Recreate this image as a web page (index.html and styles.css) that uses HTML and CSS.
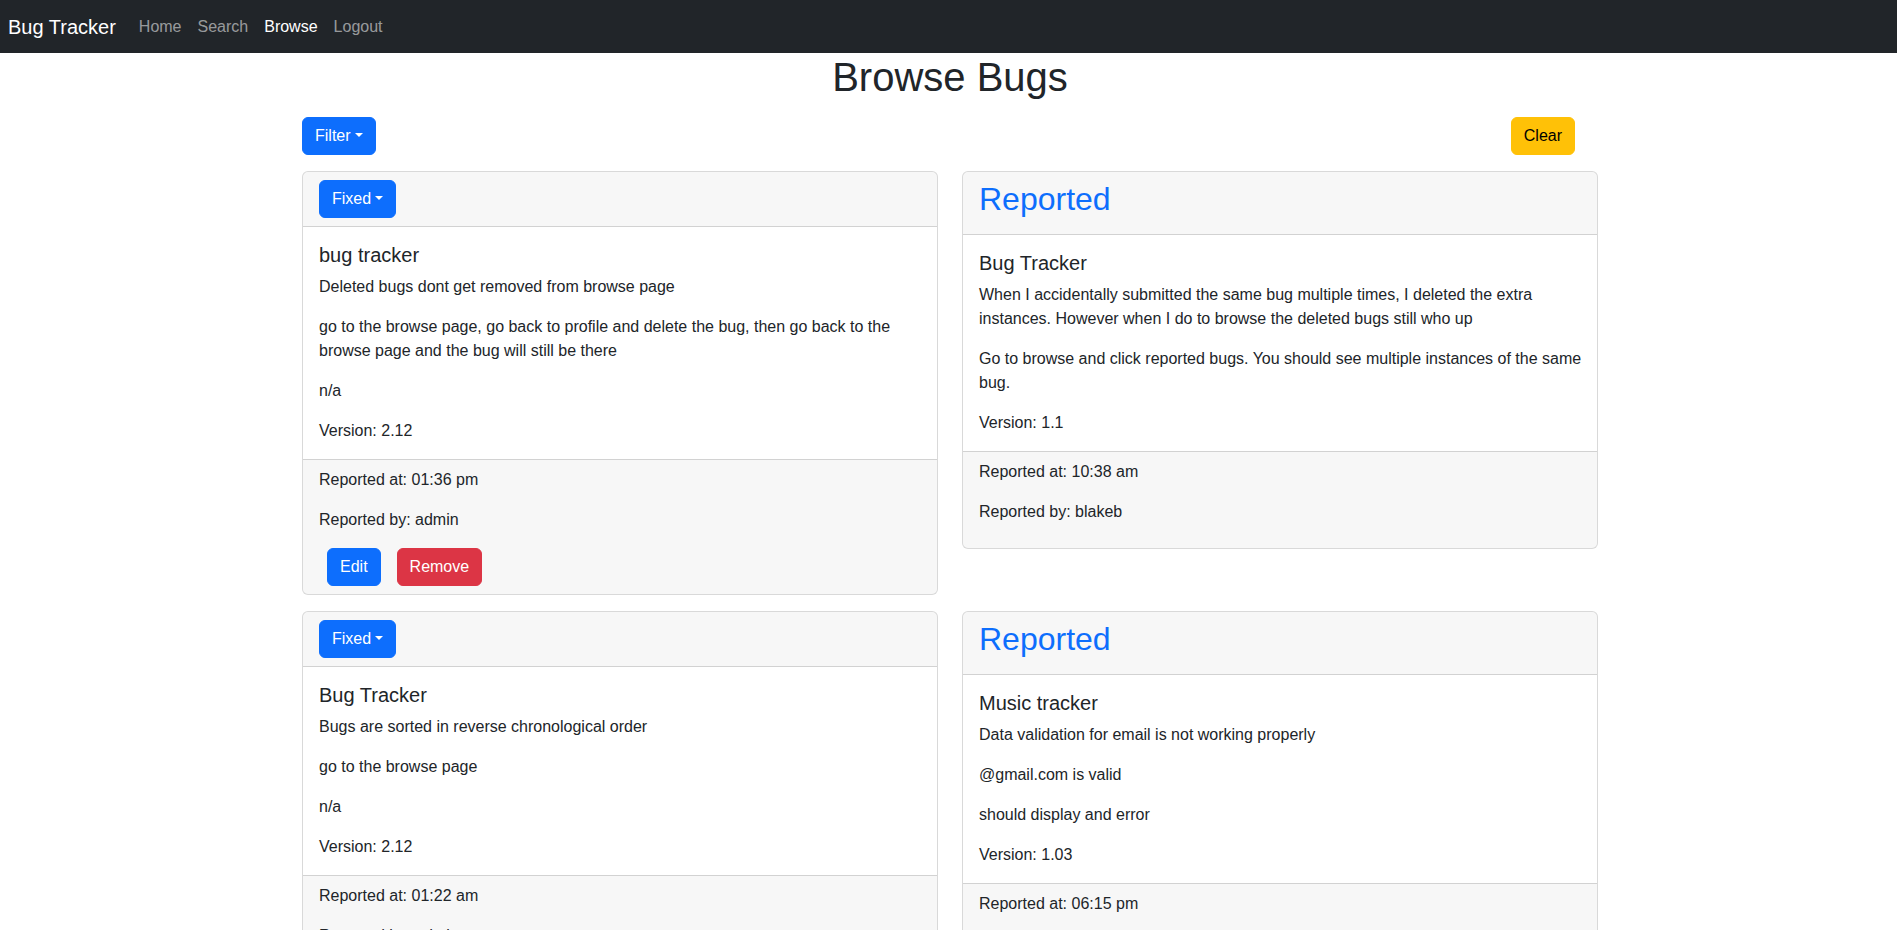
FILE: index.html
```html
<!DOCTYPE html>
<html lang="en">
<head>
<meta charset="utf-8">
<title>Browse Bugs</title>
<link rel="stylesheet" href="styles.css">
</head>
<body>
<nav class="navbar">
  <a class="brand" href="#">Bug Tracker</a>
  <ul class="nav-links">
    <li><a class="nav-link" href="#">Home</a></li>
    <li><a class="nav-link" href="#">Search</a></li>
    <li><a class="nav-link active" href="#">Browse</a></li>
    <li><a class="nav-link" href="#">Logout</a></li>
  </ul>
</nav>

<main class="container">
  <h1 class="page-title">Browse Bugs</h1>

  <div class="toolbar">
    <button class="btn btn-primary dropdown-toggle">Filter</button>
    <button class="btn btn-warning btn-clear">Clear</button>
  </div>

  <div class="bug-grid">
    <div class="card">
      <div class="card-header">
        <button class="btn btn-primary dropdown-toggle">Fixed</button>
      </div>
      <div class="card-body">
        <h5 class="card-title">bug tracker</h5>
        <p class="card-text">Deleted bugs dont get removed from browse page</p>
        <p class="card-text">go to the browse page, go back to profile and delete the bug, then go back to the browse page and the bug will still be there</p>
        <p class="card-text">n/a</p>
        <p class="card-text">Version: 2.12</p>
      </div>
      <div class="card-footer">
        <p>Reported at: 01:36 pm</p>
        <p>Reported by: admin</p>
        <div class="actions">
          <button class="btn btn-primary">Edit</button>
          <button class="btn btn-danger">Remove</button>
        </div>
      </div>
    </div>

    <div class="card">
      <div class="card-header">
        <h2 class="status">Reported</h2>
      </div>
      <div class="card-body">
        <h5 class="card-title">Bug Tracker</h5>
        <p class="card-text">When I accidentally submitted the same bug multiple times, I deleted the extra instances. However when I do to browse the deleted bugs still who up</p>
        <p class="card-text">Go to browse and click reported bugs. You should see multiple instances of the same bug.</p>
        <p class="card-text">Version: 1.1</p>
      </div>
      <div class="card-footer">
        <p>Reported at: 10:38 am</p>
        <p>Reported by: blakeb</p>
      </div>
    </div>

    <div class="card">
      <div class="card-header">
        <button class="btn btn-primary dropdown-toggle">Fixed</button>
      </div>
      <div class="card-body">
        <h5 class="card-title">Bug Tracker</h5>
        <p class="card-text">Bugs are sorted in reverse chronological order</p>
        <p class="card-text">go to the browse page</p>
        <p class="card-text">n/a</p>
        <p class="card-text">Version: 2.12</p>
      </div>
      <div class="card-footer">
        <p>Reported at: 01:22 am</p>
        <p>Reported by: admin</p>
        <div class="actions">
          <button class="btn btn-primary">Edit</button>
          <button class="btn btn-danger">Remove</button>
        </div>
      </div>
    </div>

    <div class="card">
      <div class="card-header">
        <h2 class="status">Reported</h2>
      </div>
      <div class="card-body">
        <h5 class="card-title">Music tracker</h5>
        <p class="card-text">Data validation for email is not working properly</p>
        <p class="card-text">@gmail.com is valid</p>
        <p class="card-text">should display and error</p>
        <p class="card-text">Version: 1.03</p>
      </div>
      <div class="card-footer">
        <p>Reported at: 06:15 pm</p>
        <p>Reported by: blakeb</p>
      </div>
    </div>
  </div>
</main>
</body>
</html>
```

FILE: styles.css
```css
* {
  box-sizing: border-box;
}

body {
  margin: 0;
  font-family: "Liberation Sans", Arial, sans-serif;
  font-size: 16px;
  line-height: 1.5;
  color: #212529;
  background: #fff;
}

/* Navbar */
.navbar {
  display: flex;
  align-items: center;
  height: 53px;
  padding: 0 8px;
  background: #212529;
}

.brand {
  font-size: 20px;
  line-height: 30px;
  color: #fff;
  text-decoration: none;
  margin-right: 15px;
}

.nav-links {
  display: flex;
  list-style: none;
  margin: 0;
  padding: 0;
}

.nav-link {
  display: block;
  padding: 8px;
  color: rgba(255, 255, 255, 0.55);
  text-decoration: none;
}

.nav-link.active {
  color: #fff;
}

/* Layout */
.container {
  width: 1296px;
  margin-left: calc(50% - 646.5px);
}

.page-title {
  margin: 0 0 8px;
  font-size: 40px;
  line-height: 48px;
  font-weight: 500;
  text-align: center;
}

.toolbar {
  display: flex;
  justify-content: space-between;
  margin-top: 16px;
  margin-bottom: 16px;
}

.btn-clear {
  margin-right: 23px;
}

/* Buttons */
.btn {
  display: inline-block;
  padding: 6px 12px;
  font-family: inherit;
  font-size: 16px;
  line-height: 24px;
  border: 1px solid transparent;
  border-radius: 6px;
  cursor: pointer;
}

.btn-primary {
  background: #0d6efd;
  border-color: #0d6efd;
  color: #fff;
}

.btn-warning {
  background: #ffc107;
  border-color: #ffc107;
  color: #000;
}

.btn-danger {
  background: #dc3545;
  border-color: #dc3545;
  color: #fff;
}

.dropdown-toggle::after {
  content: "";
  display: inline-block;
  margin-left: 0.255em;
  vertical-align: 0.255em;
  border-top: 0.3em solid;
  border-right: 0.3em solid transparent;
  border-bottom: 0;
  border-left: 0.3em solid transparent;
}

/* Cards */
.bug-grid {
  display: grid;
  grid-template-columns: 1fr 1fr;
  column-gap: 24px;
  row-gap: 16px;
  align-items: start;
}

.card {
  border: 1px solid rgba(0, 0, 0, 0.15);
  border-radius: 6px;
  overflow: hidden;
  background: #fff;
}

.card-header {
  padding: 8px 16px;
  background: rgba(0, 0, 0, 0.032);
  border-bottom: 1px solid rgba(0, 0, 0, 0.15);
}

.status {
  margin: 0 0 8px;
  font-size: 32px;
  line-height: 38.4px;
  font-weight: 500;
  color: #0d6efd;
}

.card-body {
  padding: 16px 12px 16px 16px;
}

.card-title {
  margin: 0 0 8px;
  font-size: 20px;
  line-height: 24px;
  font-weight: 500;
}

.card-text {
  margin: 0 0 16px;
}

.card-text:last-child {
  margin-bottom: 0;
}

.card-footer {
  padding: 8px 16px;
  background: rgba(0, 0, 0, 0.032);
  border-top: 1px solid rgba(0, 0, 0, 0.15);
}

.card-footer p {
  margin: 0 0 16px;
}

.actions {
  display: flex;
  gap: 16px;
  padding-left: 8px;
}
```
